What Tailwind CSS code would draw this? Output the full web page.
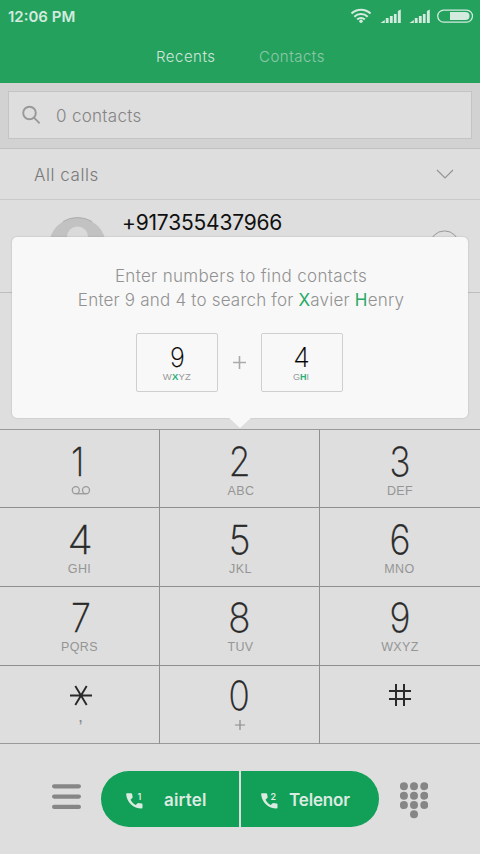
<!DOCTYPE html>
<html lang="en">
<head>
<meta charset="utf-8">
<title>Dialer</title>
<script src="https://cdn.jsdelivr.net/npm/@tailwindcss/browser@4"></script>
</head>
<body class="w-[480px] h-[854px] overflow-hidden bg-[#dedede] font-['Inter','Roboto',sans-serif]">
<div class="relative flex flex-col w-[480px] h-[854px] overflow-hidden">
  <header class="h-[83px] shrink-0 bg-[#25a15e] flex flex-col">
    <div class="h-8 pl-2 pr-[6px] flex items-center justify-between text-[#d3ebdf]">
      <span class="text-[15px] leading-8 mt-px font-semibold tracking-[0px]">12:06 PM</span>
      <svg width="124" height="18" viewBox="350 7 124 18" fill="none" stroke="currentColor">
        <path d="M351.500 13.600a13.500 13.500 0 0 1 19 0M354.300 16.700a9.500 9.500 0 0 1 13.400 0M357.200 19.600a5.400 5.400 0 0 1 7.600 0" stroke-width="2.100"/>
        <circle cx="361" cy="21.300" r="1.700" fill="currentColor" stroke="none"/>
        <g fill="currentColor" stroke="none">
          <path id="bars" d="M380.500 23l4.300-3v3zM385.800 18h2.800v5h-2.800zM389.900 16h2.800v7h-2.800zM393.900 14h2.700v9h-2.700zM397.900 11l2.900-1.500v13.500h-2.900z"/>
          <use href="#bars" x="29"/>
          <path d="M450 12h15.500a4 4 0 0 1 0 8h-15.500z"/>
        </g>
        <rect x="437.700" y="10.100" width="34.800" height="12" rx="6" stroke-width="1.300"/>
      </svg>
    </div>
    <nav class="flex pl-[156px] gap-[42px] text-[15px] leading-[50px] tracking-[0.5px]">
      <span class="w-[61px] text-[#d0e6db] font-light">Recents</span>
      <span class="text-[#8dc9a9] font-light">Contacts</span>
    </nav>
  </header>

  <section class="h-[66px] shrink-0 bg-[#d2d2d2] border-b border-[#c1c1c1] px-2 pt-2">
    <div class="h-12 bg-[#dedede] border border-[#c4c4c4] flex items-center pl-[13px]">
      <svg width="19" height="20" viewBox="0 0 19 20" fill="none" stroke="#999" stroke-width="1.900"><circle cx="7.500" cy="8" r="6.300"/><path d="M12 12.700l5.600 5.600"/></svg>
      <span class="ml-[15px] mt-[3px] text-[17px] font-[350] text-[#838383] tracking-[0.3px]">0 contacts</span>
    </div>
  </section>

  <section class="h-[51px] shrink-0 border-b border-[#cacaca] flex items-center justify-between pl-[34px] pr-[26px]">
    <span class="text-[17px] font-[350] text-[#787878] tracking-[0.55px] mt-[3px]">All calls</span>
    <svg width="18" height="10" viewBox="0 0 18 10" fill="none" stroke="#959595" stroke-width="1.200"><path d="M1 1l8 8 8-8"/></svg>
  </section>

  <section class="h-[93px] shrink-0 border-b border-[#bdbdbd] flex items-start pl-[49px] pr-[20px]">
    <svg class="mt-[17px]" width="58" height="58" viewBox="0 0 58 58"><circle cx="28.500" cy="29" r="28.500" fill="#c2c2c2"/><path d="M14 4.500a28.500 28.500 0 0 1 29 0" fill="none" stroke="#a5a5a5" stroke-width=".8"/><circle cx="28.500" cy="20" r="10.500" fill="#dadada"/></svg>
    <span class="ml-[15px] mt-2 text-[21px] leading-[30px] tracking-[-0.2px] text-[#101010]">+917355437966</span>
    <svg class="ml-auto mt-[30px]" width="31" height="31" viewBox="0 0 31 31"><circle cx="15.500" cy="15.500" r="14.600" fill="none" stroke="#999"/></svg>
  </section>
  <div class="grow"></div>

  <section class="h-[315px] shrink-0 grid grid-cols-[160px_160px_160px] grid-rows-[78px_79px_79px_78px] border-y border-[#999] text-center text-[#292929]">
    <div class="border-r border-b border-[#8f8f8f] flex flex-col items-center">
      <span class="h-[56px] pt-[7px] text-[40px] leading-[50px] font-extralight [-webkit-text-stroke:0.4px] scale-x-[.88] -translate-x-[2px]">1</span>
      <div class="w-full pl-[71px]"><svg width="20" height="9" viewBox="0 0 20 9" fill="none" stroke="#9a9a9a" stroke-width="1.300"><circle cx="4.800" cy="4.200" r="3.500"/><circle cx="15" cy="4.200" r="3.500"/><path d="M5 7.700h10"/></svg></div>
    </div>
    <div class="border-r border-b border-[#8f8f8f] flex flex-col"><span class="h-[53px] pt-[7px] text-[40px] leading-[50px] font-extralight [-webkit-text-stroke:0.4px] scale-x-[.88]">2</span><span class="font-['Liberation_Sans',sans-serif] text-[12.500px] leading-[17px] tracking-[0.5px] pl-[3px] text-[#959595]">ABC</span></div>
    <div class="border-b border-[#8f8f8f] flex flex-col"><span class="h-[53px] pt-[7px] text-[40px] leading-[50px] font-extralight [-webkit-text-stroke:0.4px] scale-x-[.88]">3</span><span class="font-['Liberation_Sans',sans-serif] text-[12.500px] leading-[17px] tracking-[0.4px] text-[#959595]">DEF</span></div>

    <div class="border-r border-b border-[#8f8f8f] flex flex-col"><span class="h-[53px] pt-[7px] text-[40px] leading-[50px] font-extralight [-webkit-text-stroke:0.4px] scale-x-[1.03] translate-x-[.5px]">4</span><span class="font-['Liberation_Sans',sans-serif] text-[12.500px] leading-[17px] tracking-[0.4px] text-[#959595]">GHI</span></div>
    <div class="border-r border-b border-[#8f8f8f] flex flex-col"><span class="h-[53px] pt-[7px] text-[40px] leading-[50px] font-extralight [-webkit-text-stroke:0.4px] scale-x-[.94]">5</span><span class="font-['Liberation_Sans',sans-serif] text-[12.500px] leading-[17px] tracking-[0.5px] pl-[2px] text-[#959595]">JKL</span></div>
    <div class="border-b border-[#8f8f8f] flex flex-col"><span class="h-[53px] pt-[7px] text-[40px] leading-[50px] font-extralight [-webkit-text-stroke:0.4px] scale-x-[.9]">6</span><span class="font-['Liberation_Sans',sans-serif] text-[12.500px] leading-[17px] tracking-[0.5px] pr-px text-[#959595]">MNO</span></div>

    <div class="border-r border-b border-[#8f8f8f] flex flex-col"><span class="h-[52px] pt-[6px] text-[40px] leading-[50px] font-extralight [-webkit-text-stroke:0.4px] scale-x-[.9] translate-x-[1.500px]">7</span><span class="font-['Liberation_Sans',sans-serif] text-[12.500px] leading-[17px] tracking-[0.4px] text-[#959595]">PQRS</span></div>
    <div class="border-r border-b border-[#8f8f8f] flex flex-col"><span class="h-[52px] pt-[6px] text-[40px] leading-[50px] font-extralight [-webkit-text-stroke:0.4px] scale-x-[.92]">8</span><span class="font-['Liberation_Sans',sans-serif] text-[12.500px] leading-[17px] tracking-[0.4px] pl-[2px] text-[#959595]">TUV</span></div>
    <div class="border-b border-[#8f8f8f] flex flex-col"><span class="h-[52px] pt-[6px] text-[40px] leading-[50px] font-extralight [-webkit-text-stroke:0.4px] scale-x-[.9]">9</span><span class="font-['Liberation_Sans',sans-serif] text-[12.500px] leading-[17px] tracking-[0.4px] text-[#959595]">WXYZ</span></div>

    <div class="border-r border-[#8f8f8f] flex flex-col items-center pt-[19px] pl-[2px]">
      <svg width="22" height="21" viewBox="0 0 22 21" fill="none" stroke="#292929" stroke-width="1.900"><path d="M0 10.500h22M5.300 1l11.400 19M16.700 1l-11.400 19"/></svg>
      <span class="mt-[2px] text-[18px] leading-4 text-[#8a8a8a] font-['Liberation_Sans',sans-serif]">,</span>
    </div>
    <div class="border-r border-[#8f8f8f] flex flex-col items-center"><span class="h-[54px] pt-[5px] text-[40px] leading-[50px] font-extralight [-webkit-text-stroke:0.4px] scale-x-[.88]">0</span><svg width="10" height="10" viewBox="0 0 10 10" stroke="#8a8a8a" stroke-width="1.200"><path d="M5 0v10M0 5h10"/></svg></div>
    <div class="flex justify-center pt-[18px]">
      <svg width="22" height="22" viewBox="0 0 22 22" stroke="#292929" stroke-width="2"><path d="M7 0v22M15 0v22M0 7h22M0 15h22"/></svg>
    </div>
  </section>

  <footer class="h-[110px] shrink-0 flex items-start pl-[52px]">
    <svg class="mt-[40px]" width="29" height="26" viewBox="0 0 29 26" stroke="#868686" stroke-width="4.200" stroke-linecap="round"><path d="M2.100 2.300h24.800M2.100 12.600h24.800M2.100 22.900h24.800"/></svg>
    <div class="mt-[26.500px] ml-[20px] w-[278px] h-[56.500px] flex gap-[2px] text-[#dcebe2] text-[17px] font-semibold">
      <button class="w-[138px] rounded-l-full bg-[#129f57] flex items-center pl-[25px]">
        <svg class="mt-1" width="18" height="18" viewBox="0 0 18 18" fill="currentColor"><path d="M1 1.200h4.200c.5 0 .8.300.9.800l.6 3.500-2.200 2.300c1.200 2.300 2.800 3.900 5.200 5.200l2.300-2.100 3.700.7c.5.100.8.400.8.900v3.100c0 .6-.4.900-1 .9C7.500 16.500 1 10.500.2 2.400.1 1.700.4 1.200 1 1.200z"/><text x="11.500" y="7.500" font-size="9">1</text></svg>
        <span class="ml-[20px] mt-[4px] tracking-[0.15px]">airtel</span>
      </button>
      <button class="w-[138px] rounded-r-full bg-[#129f57] flex items-center pl-[20px]">
        <svg class="mt-1" width="18" height="18" viewBox="0 0 18 18" fill="currentColor"><path d="M1 1.200h4.200c.5 0 .8.300.9.800l.6 3.500-2.200 2.300c1.200 2.300 2.800 3.900 5.200 5.200l2.300-2.100 3.700.7c.5.100.8.400.8.900v3.100c0 .6-.4.900-1 .9C7.500 16.500 1 10.500.2 2.400.1 1.700.4 1.200 1 1.200z"/><text x="9.500" y="7.500" font-size="9">2</text></svg>
        <span class="ml-[10px] mt-[4px] tracking-[-0.15px]">Telenor</span>
      </button>
    </div>
    <svg class="ml-[21px] mt-[38px]" width="28" height="37" viewBox="0 0 28 37" fill="#868686"><circle cx="3.900" cy="4.200" r="4"/><circle cx="14" cy="4.200" r="4"/><circle cx="24.300" cy="4.200" r="4"/><circle cx="3.900" cy="13.700" r="4"/><circle cx="14" cy="13.700" r="4"/><circle cx="24.300" cy="13.700" r="4"/><circle cx="3.900" cy="23.100" r="4"/><circle cx="14" cy="23.100" r="4"/><circle cx="24.300" cy="23.100" r="4"/><circle cx="14" cy="32.300" r="4"/></svg>
  </footer>

  <!-- Search hint bubble -->
  <aside class="absolute left-3 top-[237px] w-[456px] h-[181px] rounded-[5px] bg-[#f8f8f8] shadow-[0_0_2px_rgba(0,0,0,0.2)] flex flex-col items-center pt-[27px]">
    <p class="text-[17px] leading-6 font-[350] text-[#929292] text-center whitespace-nowrap pl-[2px]"><span class="tracking-[0.33px]">Enter numbers to find contacts</span><br><span class="tracking-[0.2px]">Enter 9 and 4 to search for <b class="font-normal text-[#27a965]">X</b>avier <b class="font-normal text-[#27a965]">H</b>enry</span></p>
    <div class="mt-[21px] pr-[2px] flex items-center">
      <div class="w-[82px] h-[59px] rounded-[2px] border border-[#cfcfcf] flex flex-col items-center pt-[7px]">
        <span class="text-[27px] leading-[33px] font-extralight [-webkit-text-stroke:0.2px] scale-x-[.94] translate-x-[.5px] text-black">9</span>
        <span class="-mt-[3px] pl-px text-[9.500px] leading-[12px] tracking-[0.2px] text-[#999] font-['Liberation_Sans',sans-serif]">W<b class="font-bold text-[#27b078]">X</b>YZ</span>
      </div>
      <svg class="mx-[15px]" width="13" height="13" viewBox="0 0 13 13" stroke="#aaa" stroke-width="1.600"><path d="M6.500 0v13M0 6.500h13"/></svg>
      <div class="w-[82px] h-[59px] rounded-[2px] border border-[#cfcfcf] flex flex-col items-center pt-[7px]">
        <span class="text-[27px] leading-[33px] font-extralight [-webkit-text-stroke:0.2px] text-black">4</span>
        <span class="-mt-[3px] pr-px text-[9px] leading-[12px] text-[#999] font-['Liberation_Sans',sans-serif]">G<b class="font-bold text-[#27b078]">H</b>I</span>
      </div>
    </div>
    <svg class="absolute left-[216px] top-[180px]" width="24" height="12" viewBox="0 0 24 12" fill="#f8f8f8"><path d="M0 0h24L12 11z"/></svg>
  </aside>
</div>
</body>
</html>
